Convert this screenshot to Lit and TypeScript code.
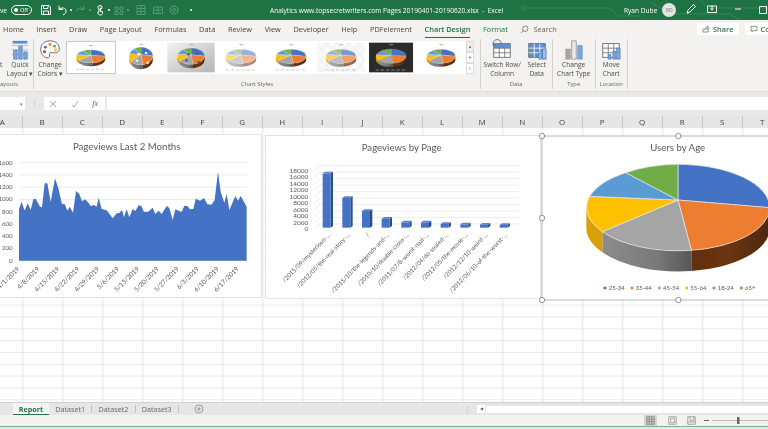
import { LitElement, html, svg, css } from "lit";
import { customElement } from "lit/decorators.js";

const AREA = "57,298 65,275 73,300 75,300 83,280 92,300 100,268 107,266 120,290 126,292 134,220 142,220 152,276 165,205 175,235 186,282 194,282 202,302 209,290 219,308 228,243 238,252 246,274 255,268 265,278 272,288 282,285 290,290 296,263 305,297 320,301 338,325 350,310 358,309 366,300 372,322 380,298 388,322 398,297 406,303 416,286 424,288 432,306 445,305 458,293 466,312 476,302 485,312 500,288 508,294 518,330 526,298 545,306 553,287 562,288 570,298 580,297 587,266 600,272 612,264 622,283 634,284 644,270 654,185 662,245 673,278 680,252 688,300 706,258 714,272 722,258 740,290";
const DATES = ["4/1/2019","4/8/2019","4/15/2019","4/22/2019","4/29/2019","5/6/2019","5/13/2019","5/20/2019","5/27/2019","6/3/2019","6/10/2019","6/17/2019"];
const PAGES = ["/2015/09/mysterious-...","/2012/05/the-real-story-...","/","/2015/10/the-legends-and-...","/2010/10/double-cross-...","/2011/07/8-worst-nazi-...","/2012/04/do-sealed-...","/2012/05/the-movie-...","/2012/12/10-weird-...","/2012/06/10-of-the-worst-..."];
const BAR_TOPS = [130,204,243,266,277,277,282,283,284,285];
const LEGEND: [string,string,number][] = [["25-34","#4472c4",207],["35-44","#ed7d31",288],["45-54","#a5a5a5",370],["55-64","#ffc000",452],["18-24","#5b9bd5",534],["65+","#70ad47",616]];
const COLS = "ABCDEFGHIJKLMNOPQRST".split("");

const A = "A275,130 0 0 1";
const B = "A275,130 0 0 0";
const pieShape = (stroke = "#e9e9e9", sw = 2) => svg`
  <path d="M705,248 ${A} 470,376 L470,438 ${B} 705,310Z" fill="url(#sideO)"/>
  <path d="M470,376 ${A} 203,320 L203,382 ${B} 470,438Z" fill="url(#sideG)"/>
  <path d="M203,320 ${A} 155,248 L155,310 ${B} 203,382Z" fill="#d6a106"/>
  <g stroke=${stroke} stroke-width=${sw}>
    <path d="M430,225 L430,118 ${A} 705,248Z" fill="#4472c4"/>
    <path d="M430,225 L705,248 ${A} 470,376Z" fill="#ed7d31"/>
    <path d="M430,225 L470,376 ${A} 203,320Z" fill="#a5a5a5"/>
    <path d="M430,225 L203,320 ${A} 165,214Z" fill="#ffc000"/>
    <path d="M430,225 L165,214 ${A} 273,143Z" fill="#5b9bd5"/>
    <path d="M430,225 L273,143 ${A} 430,118Z" fill="#70ad47"/>
  </g>`;

const defs = svg`<defs>
  <linearGradient id="sideO"><stop offset="0" stop-color="#62300f"/><stop offset=".5" stop-color="#6a3512"/><stop offset="1" stop-color="#4d260c"/></linearGradient>
  <linearGradient id="sideG"><stop offset="0" stop-color="#8c8c8c"/><stop offset=".6" stop-color="#7a7a7a"/><stop offset="1" stop-color="#575757"/></linearGradient>
</defs>`;

type T = { sx?: number; sy?: number; op?: number; bg?: string; boxes?: string; legend?: boolean; lc?: string };
const THUMBS: T[] = [
  { legend: true },
  { sx: .78, sy: 1.25, boxes: "#f4f4f4" },
  { sx: .9, sy: 1.15, bg: "url(#tg)", boxes: "#555" },
  { op: .55, legend: true },
  { legend: true },
  { op: .7, bg: "url(#hatch)", legend: true },
  { bg: "#2b2b2b", legend: true, lc: "#999" },
  { sx: .95 },
];

const thumb = (t: T, i: number) => {
  const boxes = t.boxes ? [[350,205],[520,190],[310,300],[560,330]] : [];
  return html`<div class="thumb ${i === 0 ? "sel" : ""}">
    <svg viewBox="-25 -30 909 600" preserveAspectRatio="none">
      <defs>
        <linearGradient id="tg" x1="0" y1="0" x2="1" y2="1"><stop offset="0" stop-color="#f2f2f2"/><stop offset="1" stop-color="#b5b5b5"/></linearGradient>
        <pattern id="hatch" width="20" height="20" patternUnits="userSpaceOnUse"><rect width="20" height="20" fill="#fff"/><path d="M0,20L20,0" stroke="#ddd" stroke-width="5"/></pattern>
      </defs>
      ${t.bg ? svg`<rect x="${i === 6 ? 30 : 0}" y="0" width="${i === 6 ? 800 : 860}" height="540" fill=${t.bg}/>` : ""}
      <g opacity=${t.op ?? 1} transform="translate(430 270) scale(${t.sx ?? 1} ${t.sy ?? 1}) translate(-430 -270)">
        ${pieShape("#eee", 4)}
        ${boxes.map(([x, y]) => svg`<rect x=${x} y=${y} width="55" height="30" fill=${t.boxes!}/>`)}
      </g>
      <rect x="400" y="30" width="70" height="16" fill=${t.lc ?? "#aaa"}/>
      ${t.legend ? [0,1,2,3,4,5].map(k => svg`<rect x=${150 + k * 95} y="490" width="60" height="14" fill=${t.lc ?? "#bbb"}/>`) : ""}
    </svg>
  </div>`;
};

const bi = (d: string, c = "#fff", o = 1) => html`<svg class="ti" viewBox="0 0 12 12" fill="none" stroke=${c} stroke-width="1" opacity=${o}><path d=${d}/></svg>`;
const caret = (o = 1) => html`<svg class="caret" viewBox="0 0 4 4" opacity=${o}><circle cx="2" cy="2" r="1" fill="#fff"/></svg>`;

const gridIcon = (blue = false) => svg`
  <rect x="3" y="5" width="18" height="15" fill=${blue ? "#5b8fd0" : "#fff"} stroke="#6e6e6e"/>
  <path d="M3,10H21M3,15H21M9,5V20M15,5V20" stroke=${blue ? "#fff" : "#6e6e6e"} stroke-width=".9"/>`;

@customElement("app-root")
export class AppRoot extends LitElement {
  static styles = css`
    :host { display: block; width: 768px; height: 429px; overflow: hidden; font-family: "Open Sans", "Liberation Sans", sans-serif; }
    .app { display: flex; flex-direction: column; width: 768px; height: 429px; overflow: hidden; background: #e8e8e8; color: #444; filter: blur(.45px); }
    .title { flex: 0 0 20px; background: #1f7244; color: #fff; display: flex; align-items: center; font-size: 6.6px; white-space: nowrap; overflow: hidden; position: relative; }
    .circuit { position: absolute; left: 500px; top: 0; width: 268px; height: 20px; }
    .qa, .doc, .who { position: relative; }
    .qa { flex: 0 0 270px; display: flex; align-items: center; }
    .ve { width: 10.5px; }
    .pill { box-sizing: border-box; width: 21.5px; height: 9.5px; border: 1px solid #fff; border-radius: 5px; display: flex; align-items: center; gap: 2px; padding-left: 2px; font-size: 5.6px; margin-right: 7px; }
    .pill i { width: 4.5px; height: 4.5px; border-radius: 50%; background: #fff; }
    .ti { width: 12px; height: 12px; flex: none; margin-left: 1px; }
    .caret { width: 4px; height: 4px; margin: 0 1px; flex: none; }
    .s3 { width: 3px; flex: none; }
    .s4 { width: 4px; flex: none; }
    .s8 { width: 8px; flex: none; }
    .doc { flex: 0 0 354px; }
    .who { display: flex; align-items: center; }
    .av { width: 14px; height: 14px; border-radius: 50%; background: #e3e3e3; color: #777; font-size: 5px; display: flex; align-items: center; justify-content: center; margin: 0 8px 0 5px; }
    .sp { margin-right: 8px; }
    .sp2 { margin-right: 13px; }
    .wm { margin-right: 12px; }
    .tabs { flex: 0 0 18px; background: #f3f2f1; display: flex; align-items: center; gap: 12.6px; padding-left: 3px; font-size: 7.4px; white-space: nowrap; color: #444; position: relative; }
    .tab-on { color: #217346; font-weight: 600; height: 18px; line-height: 18px; box-sizing: border-box; border-bottom: 1.5px solid #217346; }
    .g { color: #217346; }
    .search { display: flex; align-items: center; gap: 4px; color: #666; }
    .search svg { width: 9px; height: 9px; }
    .rbtn { background: #fff; height: 12.5px; display: flex; align-items: center; gap: 3px; padding: 0 5px; font-weight: 600; color: #3b6e55; box-sizing: border-box; flex: none; }
    .rbtn svg { width: 8px; height: 8px; }
    .rside { position: absolute; left: 697px; top: 2.5px; display: flex; gap: 6px; }
    .ribbon { flex: 0 0 54px; background: #f3f2f1; display: flex; font-size: 6.6px; color: #4a4a4a; box-sizing: border-box; border-bottom: 1px solid #dedede; }
    .grp { display: grid; grid-template-rows: 1fr 10px; box-sizing: border-box; height: 50px; margin-top: 1px; border-right: 1px solid #d4d2d0; flex: none; text-align: center; }
    .grp > span { font-size: 5.8px; line-height: 10px; color: #666; white-space: nowrap; overflow: hidden; }
    .g1 { width: 34.3px; }
    .g2 { width: 446.4px; }
    .g3 { width: 72px; }
    .g4 { width: 43px; }
    .g5 { width: 32px; }
    .left { text-align: left; }
    .g1 > span { text-align: left; }
    .row { display: flex; min-width: 0; justify-content: center; }
    .row.start { justify-content: flex-start; }
    .cut { width: 6px; line-height: 9px; padding-top: 21px; text-align: left; }
    .btn { display: flex; flex-direction: column; align-items: center; line-height: 9px; white-space: nowrap; flex: none; }
    .btn svg { width: 22px; height: 22px; margin-top: -.5px; margin-bottom: -1px; }
    .ml1 { margin-left: 1px; }
    .w32 { width: 31.7px; }
    .w41 { width: 41px; }
    .w28 { width: 28px; }
    .gal { flex: none; display: flex; background: #fff; height: 33px; margin-top: 1.5px; }
    .thumb { width: 50px; height: 33px; box-sizing: border-box; flex: none; }
    .thumb svg { width: 100%; height: 100%; display: block; }
    .thumb.sel { border: 1.5px solid #c8c8c8; margin-left: .5px; width: 49.5px; }
    .scr { flex: none; display: flex; flex-direction: column; width: 8px; height: 33px; margin-top: 1.5px; background: #fff; }
    .scr b { flex: 1; display: flex; align-items: center; justify-content: center; border: .5px solid #ddd; font-size: 4px; font-weight: 400; color: #666; }
    .scr b:first-child { background: #ececec; }
    .fbar { flex: 0 0 13px; margin-top: 5px; display: flex; background: #e8e8e8; color: #777; }
    .name { width: 25px; background: #fff; display: flex; align-items: center; justify-content: flex-end; padding-right: 2px; box-sizing: border-box; font-size: 5px; }
    .dots { width: 19px; text-align: center; line-height: 12px; font-size: 7px; color: #aaa; }
    .fx { width: 61px; background: #fff; display: flex; align-items: center; justify-content: space-between; padding: 0 7px 0 5px; box-sizing: border-box; font-family: "Liberation Serif", serif; font-size: 8px; font-style: italic; color: #666; }
    .fx svg { width: 8px; height: 8px; }
    .input { flex: 1; background: #fff; margin-left: 2px; }
    .cols { flex: 0 0 12px; margin-top: 6px; display: flex; background: #e6e6e6; font-size: 8px; color: #444; overflow: hidden; }
    .cols span { flex: 0 0 40px; box-sizing: border-box; text-align: center; line-height: 12px; border-right: 1px solid #c6c6c6; }
    .cols span:first-child { margin-left: -17.3px; }
    .sheet { flex: 0 0 274px; position: relative; overflow: hidden; background-color: #fff;
      background-image: linear-gradient(to right, #e3e3e3 1px, transparent 1px), linear-gradient(to bottom, #e9e9e9 1px, transparent 1px);
      background-size: 40px 100%, 100% 11.83px; background-position: 22.3px 0, 0 -.8px; }
    .chart { position: absolute; background: #fff; box-sizing: border-box; }
    .chart svg { display: block; overflow: visible; font-family: Lato, "Liberation Sans", sans-serif; }
    .c1 { left: 0; top: 7px; width: 261px; height: 162px; box-shadow: 0 0 0 1px #e2e2e2; }
    .c2 { left: 266px; top: 8px; width: 274px; height: 162px; box-shadow: 0 0 0 1px #e2e2e2; }
    .c3 { left: 542.3px; top: 8px; width: 226px; height: 164px; }
    .stabs { flex: 0 0 13px; background: #e6e6e6; display: flex; align-items: center; font-size: 7.2px; color: #666; box-sizing: border-box; border-top: 1px solid #d0d0d0; }
    .stab { padding: 0 6.2px; border-right: 1px solid #c4c4c4; height: 8px; display: flex; align-items: center; white-space: nowrap; }
    .stab.first { padding-left: 0; }
    .stab-on { margin-left: 12.7px; width: 36.5px; box-sizing: border-box; height: 12px; background: #f5f5f5; border-bottom: 1.5px solid #217346; color: #217346; font-weight: 700; display: flex; align-items: center; justify-content: center; margin-right: 6px; }
    .plus { width: 10px; height: 10px; margin-left: 15px; }
    .hs { margin-left: auto; display: flex; align-items: center; height: 8px; }
    .hs i { width: 8px; height: 8px; background: #fff; font-style: normal; font-size: 4px; text-align: center; line-height: 8px; color: #555; margin-right: 1px; }
    .hs u { width: 282px; height: 7px; background: #fff; display: block; }
    .vd { color: #aaa; margin-right: 6px; font-size: 7px; }
    .status { flex: 0 0 11px; background: #f3f2f1; display: flex; align-items: stretch; border-bottom: 1px solid #86a896; }
    .vw { width: 14px; margin-left: 644px; background: #d6d4d2; display: flex; align-items: center; justify-content: center; }
    .vw2 { width: 19px; display: flex; align-items: center; justify-content: center; flex: none; }
    .vw2.first { margin-left: 6px; }
    .status svg { width: 9px; height: 9px; }
    .zoom { flex: none; display: flex; align-items: center; margin-left: 3px; }
    .zoom svg { width: 64px; height: 9px; }
  `;

  area() {
    return html`<svg viewBox="0 75 783 486" width="261" height="162">
      ${[0,1,2,3,4,5,6,7,8].map(i => svg`<line x1="57" x2="740" y1=${158 + i * 36.75} y2=${158 + i * 36.75} stroke="#e6e6e6" stroke-width="2.5"/>
        <text x="38" y=${164 + i * 36.75} font-size="18.5" fill="#595959" text-anchor="end">${1600 - i * 200}</text>`)}
      <polygon points="57,452 ${AREA} 740,452" fill="#4472c4"/>
      ${DATES.map((d, i) => { const x = 60 + i * 59.8; return svg`<text x=${x} y="478" font-size="19.5" fill="#595959" text-anchor="end" transform="rotate(-45 ${x} 478)">${d}</text>`; })}
      <text x="380" y="121" font-size="29" fill="#595959" text-anchor="middle">Pageviews Last 2 Months</text>
    </svg>`;
  }

  bars() {
    return html`<svg viewBox="3 18 822 486" width="274" height="162">
      ${[0,1,2,3,4,5,6,7,8,9].map(i => { const y = 107 + i * 19.44; return svg`
        <path d="M148,${y + 15} L165,${y} H762" fill="none" stroke="#e4e4e4" stroke-width="2"/>
        <text x="130" y=${y + 21} font-size="19.5" fill="#595959" text-anchor="end">${18000 - i * 2000}</text>`; })}
      ${BAR_TOPS.map((t, i) => { const x = 173 + i * 59; return svg`
        <path d="M${x + 24},${t} l7,-5 V288 l-7,5Z" fill="#2a4d8c"/>
        <path d="M${x},${t} l7,-5 h24 l-7,5Z" fill="#5b84cc"/>
        <rect x=${x} y=${t} width="24" height=${293 - t} fill="#4472c4"/>`; })}
      ${PAGES.map((p, i) => { const x = 197 + i * 59; return svg`<text x=${x} y="316" font-size="18.5" fill="#595959" text-anchor="end" transform="rotate(-46 ${x} 316)">${p}</text>`; })}
      <text x="410" y="63" font-size="29" fill="#595959" text-anchor="middle">Pageviews by Page</text>
    </svg>`;
  }

  pie() {
    const h = [[22,33],[431,33],[22,279],[22,525],[431,525]];
    return html`<svg viewBox="22 33 678 492" width="226" height="164">
      ${defs}
      ${pieShape()}
      <text x="429" y="78" font-size="29" fill="#595959" text-anchor="middle">Users by Age</text>
      ${LEGEND.map(([t, c, x]) => svg`<rect x=${x} y="485" width="8" height="8" fill=${c}/><text x=${x + 15} y="495" font-size="18" fill="#595959">${t}</text>`)}
      <path d="M800,33 H22 V525 H800" fill="none" stroke="#b5b5b5" stroke-width="3"/>
      ${h.map(([x, y]) => svg`<circle cx=${x} cy=${y} r="8" fill="#fff" stroke="#7f7f7f" stroke-width="2.5"/>`)}
    </svg>`;
  }

  render() {
    return html`<div class="app">
      <div class="title">
        <svg class="circuit" viewBox="0 0 268 20" fill="none" stroke="#3a8a5e" stroke-width=".8"><circle cx="24" cy="8" r="2"/><path d="M26,8H110L118,16H140M150,2L170,14H230L240,20M200,0L208,8H268"/></svg>
        <div class="qa">
          <span class="ve">ve</span>
          <span class="pill"><i></i>Off</span>
          ${bi("M1.5,1.5H9L10.5,3V10.5H1.5ZM3.5,1.5V4.5H8V1.5M3.5,10.5V7H8.5V10.5")}
          <span class="s3"></span>
          ${bi("M3,1.5V5.5H7M3,5.5C5,3 10,3.5 10,7C10,9 9,10 7,11")}${caret()}
          ${bi("M9,1.5V5.5H5M9,5.5C7,3 2,3.5 2,7", "#fff", .25)}${caret(.35)}
          ${bi("M4,3.5a2,2 0 1 1 4,0a2,2 0 1 1 -4,0M5,5.5V8H4C3.5,10 5,11 6.5,11S9,10 8.5,7.5H6.5V3.5")}${caret()}
          ${bi("M2,3H5V6H2ZM7,3H10V6H7ZM2,7.5H5V10.5H2ZM7,7.5H10V10.5H7Z", "#8cc3a4", .5)}${caret(.35)}
          <span class="s3"></span>
          ${bi("M2,1.5H10V10.5H2ZM2,4.5H10M2,7.5H10M6,1.5V10.5", "#8cc3a4", .5)}
          <span class="s4"></span>
          ${bi("M1.5,3H10.5V9.5H1.5ZM1.5,6H10.5M6,3V9.5", "#8cc3a4", .5)}
          <span class="s3"></span>
          ${bi("M6,2a4,4 0 1 0 .01,0M6,4.5a1.5,1.5 0 1 0 .01,0", "#8cc3a4", .6)}
          <span class="s8"></span>${caret()}
        </div>
        <div class="doc">Analytics www.topsecretwriters.com Pages 20190401-20190620.xlsx&nbsp; -&nbsp; Excel</div>
        <div class="who">
          <span>Ryan Dube</span>
          <span class="av">RD</span>
          <span class="sp">${bi("M2,10L3,7L8.5,1.5L10.5,3.5L5,9ZM2,10L4,9.5")}</span>
          <span class="sp2">${bi("M1.5,3H10.5V9.5H1.5ZM6,3V7L4.5,5.8M6,7L7.5,5.8")}</span>
          <span class="wm">${bi("M3,6H9")}</span>
          ${bi("M2.5,2.5H9.5V9.5H2.5Z")}
        </div>
      </div>

      <div class="tabs">
        <span>Home</span><span>Insert</span><span>Draw</span><span>Page Layout</span><span>Formulas</span><span>Data</span><span>Review</span><span>View</span><span>Developer</span><span>Help</span><span>PDFelement</span>
        <span class="tab-on">Chart Design</span><span class="g">Format</span>
        <span class="search"><svg viewBox="0 0 12 12" fill="none" stroke="#666"><circle cx="7" cy="5" r="3.6"/><path d="M4.5,7.5L1.5,10.5"/></svg>Search</span>
        <div class="rside">
          <span class="rbtn"><svg viewBox="0 0 12 12" fill="none" stroke="#3b6e55"><path d="M1.5,5V10.5H9.5V7M4,7C4,4.5 6,3.5 8,3.5V1.5L11,4.5L8,7V5.5C6,5.5 5,6 4,7Z"/></svg>Share</span>
          <span class="rbtn"><svg viewBox="0 0 12 12" fill="none" stroke="#3b6e55"><path d="M1.5,2H10.5V8.5H5L3,10.5V8.5H1.5Z"/></svg>Comments</span>
        </div>
      </div>

      <div class="ribbon">
        <div class="grp g1">
          <div class="row start">
            <span class="cut">t</span>
            <div class="btn ml1">
              <svg viewBox="0 0 24 24"><rect x="4" y="2" width="16" height="3" fill="#5b8fd0"/><path d="M3,7H21M3,12H21M3,17H21" stroke="#aaa" stroke-width=".8"/><path d="M5,12h4v10H5ZM10.5,8h4v14h-4ZM16,14h4v8h-4Z" fill="#7aa6d8" stroke="#4472c4" stroke-width=".6"/></svg>
              Quick<br />Layout ▾
            </div>
          </div>
          <span>ayouts</span>
        </div>
        <div class="grp g2">
          <div class="row start">
            <div class="btn w32">
              <svg viewBox="0 0 24 24"><path d="M12,2C5,2 1,7 2,13C3,19 9,22 11,20C13,18 10,16 12,15C14,14 20,17 22,12C23,6 18,2 12,2Z" fill="#fff" stroke="#666"/><circle cx="7" cy="9" r="1.6" fill="#4472c4"/><circle cx="12" cy="6" r="1.6" fill="#ed7d31"/><circle cx="17" cy="8" r="1.6" fill="#70ad47"/><circle cx="6" cy="14" r="1.6" fill="#c0392b"/><circle cx="18" cy="12" r="1.6" fill="#ffc000"/></svg>
              Change<br />Colors ▾
            </div>
            <div class="gal">${THUMBS.map(thumb)}</div>
            <div class="scr"><b>▲</b><b>▼</b><b>≡</b></div>
          </div>
          <span>Chart Styles</span>
        </div>
        <div class="grp g3">
          <div class="row">
            <div class="btn w41">
              <svg viewBox="0 0 24 24">${gridIcon()}<path d="M3,5H21V10H3Z" fill="#5b8fd0"/><path d="M5,1C9,0 11,2 11,5M4,8C1,6 2,3 5,1" fill="none" stroke="#555" stroke-width="1"/></svg>
              Switch Row/<br />Column
            </div>
            <div class="btn w28">
              <svg viewBox="0 0 24 24">${gridIcon(true)}<path d="M14,22V15h3v7ZM18,22V11h4v11Z" fill="#9dbce0" stroke="#4472c4" stroke-width=".7"/></svg>
              Select<br />Data
            </div>
          </div>
          <span>Data</span>
        </div>
        <div class="grp g4">
          <div class="row">
            <div class="btn">
              <svg viewBox="0 0 24 24"><path d="M3,11h5v11H3Z" fill="#a8a8a8" stroke="#888" stroke-width=".6"/><path d="M9.5,2h5v20h-5Z" fill="#e8e8e8" stroke="#888" stroke-width=".8"/><path d="M16,7h5v15h-5Z" fill="#7aa6d8" stroke="#5b8fd0" stroke-width=".6"/></svg>
              Change<br />Chart Type
            </div>
          </div>
          <span>Type</span>
        </div>
        <div class="grp g5">
          <div class="row">
            <div class="btn">
              <svg viewBox="0 0 24 24">${gridIcon()}<path d="M9,22V17h3v5ZM14,22V13h3v9ZM18,22V10h4v12Z" fill="#7aa6d8" stroke="#4472c4" stroke-width=".6"/></svg>
              Move<br />Chart
            </div>
          </div>
          <span>Location</span>
        </div>
      </div>

      <div class="fbar">
        <div class="name">▾</div>
        <div class="dots">⋮</div>
        <div class="fx">
          <svg viewBox="0 0 8 8" stroke="#aaa" fill="none"><path d="M1,1L7,7M7,1L1,7"/></svg>
          <svg viewBox="0 0 8 8" stroke="#aaa" fill="none"><path d="M1,4.5L3,7L7,1"/></svg>
          <span>fx</span>
        </div>
        <div class="input"></div>
      </div>

      <div class="cols">${COLS.map(c => html`<span>${c}</span>`)}</div>

      <div class="sheet">
        <div class="chart c1">${this.area()}</div>
        <div class="chart c2">${this.bars()}</div>
        <div class="chart c3">${this.pie()}</div>
      </div>

      <div class="stabs">
        <span class="stab-on">Report</span>
        <span class="stab first">Dataset1</span>
        <span class="stab">Dataset2</span>
        <span class="stab">Dataset3</span>
        <svg class="plus" viewBox="0 0 12 12" fill="none" stroke="#777" stroke-width=".8"><circle cx="6" cy="6" r="4.8"/><path d="M3.5,6H8.5M6,3.5V8.5"/></svg>
        <div class="hs"><span class="vd">⋮</span><i>◀</i><u></u></div>
      </div>

      <div class="status">
        <div class="vw"><svg viewBox="0 0 12 12" fill="none" stroke="#666" stroke-width=".8"><path d="M1,1H11V11H1ZM1,4.3H11M1,7.6H11M4.3,1V11M7.6,1V11"/></svg></div>
        <div class="vw2 first"><svg viewBox="0 0 12 12" fill="none" stroke="#777" stroke-width=".8"><path d="M1,1H11V11H1ZM3.5,3H8.5V9H3.5Z"/></svg></div>
        <div class="vw2"><svg viewBox="0 0 12 12" fill="none" stroke="#777" stroke-width=".8"><path d="M1,1H11V11H1ZM4,1V6H9V1M1,8H11"/></svg></div>
        <div class="zoom"><svg viewBox="0 0 64 9"><rect x="0" y="4" width="5" height="1" fill="#666"/><rect x="8" y="4" width="56" height=".7" fill="#aaa"/><rect x="33" y="1" width="2.5" height="7" fill="#666"/></svg></div>
      </div>
    </div>`;
  }
}
